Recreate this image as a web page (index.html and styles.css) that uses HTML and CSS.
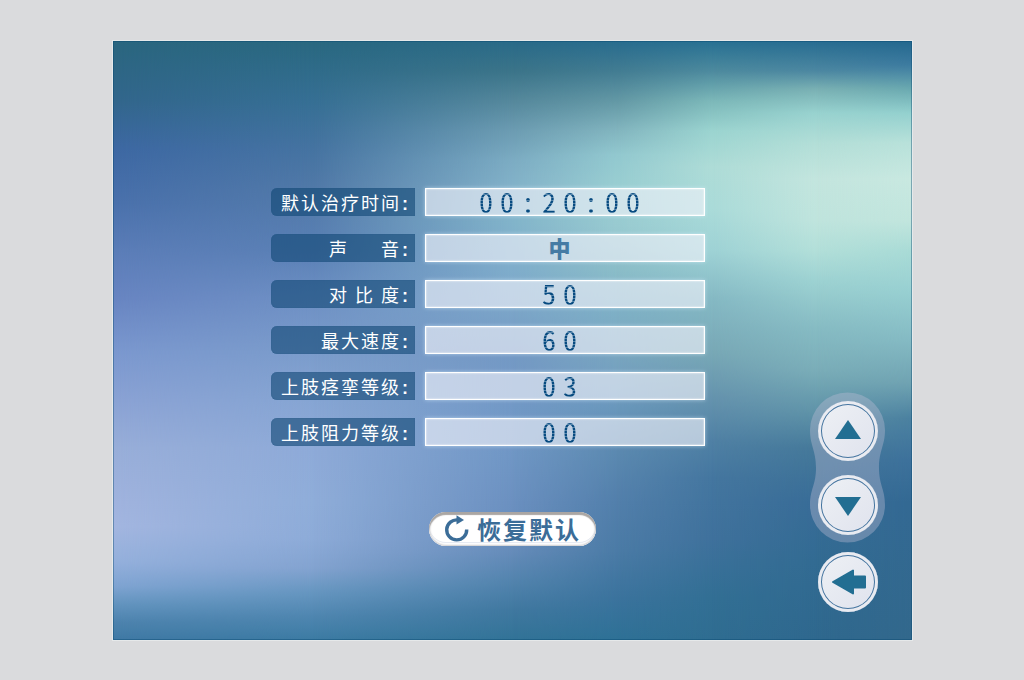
FILE: index.html
```html
<!DOCTYPE html>
<html lang="zh-CN">
  <head>
    <meta charset="UTF-8" />
    <meta name="viewport" content="width=device-width, initial-scale=1.0" />
    <title>默认设置</title>
    <link rel="stylesheet" href="styles.css">
  </head>
  <body>
    <div class="screen">
      <div class="backdrop" aria-hidden="true">
        <div class="wash wash-1"></div>
        <div class="wash wash-2"></div>
        <div class="wash wash-3"></div>
        <div class="wash wash-4"></div>
        <div class="wash wash-5"></div>
        <div class="wash wash-6"></div>
        <div class="wash wash-7"></div>
      </div>

      <form class="settings">
        <div class="rows">
          <div class="row">
            <label class="row-label" for="time">默认治疗时间<span class="colon">:</span></label>
            <div class="field"><input class="value" id="time" type="text" value="00:20:00" /></div>
          </div>
          <div class="row">
            <label class="row-label" for="sound">声&emsp;&nbsp;&nbsp;音<span class="colon">:</span></label>
            <div class="field"><input class="value word" id="sound" type="text" value="中" /></div>
          </div>
          <div class="row">
            <label class="row-label" for="contrast">对 比 度<span class="colon">:</span></label>
            <div class="field"><input class="value" id="contrast" type="text" value="50" /></div>
          </div>
          <div class="row">
            <label class="row-label" for="speed">最大速度<span class="colon">:</span></label>
            <div class="field"><input class="value" id="speed" type="text" value="60" /></div>
          </div>
          <div class="row">
            <label class="row-label" for="spasm">上肢痉挛等级<span class="colon">:</span></label>
            <div class="field"><input class="value" id="spasm" type="text" value="03" /></div>
          </div>
          <div class="row">
            <label class="row-label" for="resist">上肢阻力等级<span class="colon">:</span></label>
            <div class="field"><input class="value" id="resist" type="text" value="00" /></div>
          </div>
        </div>

        <div class="actions">
          <button class="reset" type="reset">
            <svg class="reset-icon" viewBox="0 0 26 28" aria-hidden="true">
              <path d="M14 5A10 10 0 1 0 22.700 14.500" fill="none" stroke="currentColor" stroke-width="3.4" />
              <path d="M12.500 0.300L20 5L12.500 9.500Z" fill="currentColor" />
            </svg>
            <span>恢复默认</span>
          </button>
        </div>
      </form>

      <nav class="side">
        <div class="stepper">
          <svg class="stepper-shape" viewBox="0 0 75 151" aria-hidden="true">
            <path d="M0 38A37.500 37.500 0 0 1 75 38C75 54 69 58 69 76C69 93 75 97 75 113A37.500 37.500 0 0 1 0 113C0 97 6 93 6 76C6 58 0 54 0 38Z" />
          </svg>
          <button class="round" type="button" aria-label="上">
            <svg viewBox="0 0 60 60"><path d="M30 19L43 38H17Z" /></svg>
          </button>
          <button class="round" type="button" aria-label="下">
            <svg viewBox="0 0 60 60"><path d="M17 22H43L30 41Z" /></svg>
          </button>
        </div>
        <button class="round" type="button" aria-label="返回">
          <svg viewBox="0 0 60 60"><path class="soft" d="M15 30L35 18.500V24.500H47V35.500H35V41.500Z" /></svg>
        </button>
      </nav>
    </div>
  </body>
</html>
```

FILE: styles.css
```css
* {
  margin: 0;
  padding: 0;
  box-sizing: border-box;
}

body {
  min-height: 100vh;
  padding: 41px 112px 40px 113px;
  display: flex;
  background-color: #dadbdd;
  font-family: "Noto Sans CJK SC", sans-serif;
}

.screen {
  flex: 1;
  position: relative;
  display: grid;
  grid-template-columns: 1fr 75px;
  padding-right: 27px;
  box-shadow: 0 0 0 1px #e6e9ea;
}

/* Colour mesh: each wash is a vertical gradient faded in from the previous one */
.backdrop,
.wash {
  position: absolute;
  inset: 0;
}

.backdrop::after {
  content: "";
  position: absolute;
  inset: 0;
  border: 1px solid rgba(5, 70, 110, 0.4);
}

.wash-1 {
  background: linear-gradient(#2a667f 0%, #32668c 10%, #3d68a3 18%, #4a71ac 27%, #5b7db8 35%, #6885c2 43%, #7b98cf 52%, #8aa2d4 60%, #98aed9 68%, #a0b3de 77%, #a3b6e0 81%, #94b0dc 87%, #7fa4d2 91%, #6394bf 94%, #4d83ae 97%, #3f79a5 100%);
}

.wash-2 {
  background: linear-gradient(#296880 0%, #366f94 10%, #4573a1 18%, #5179a8 25%, #5a80b5 35%, #6e90c4 43%, #7b9ccb 52%, #86a5d3 60%, #8eaad8 68%, #8fadd9 77%, #8dabd8 83%, #83a3d0 88%, #6696c0 92%, #4f86b0 96%, #3c7ba3 100%);
  mask-image: linear-gradient(to right, transparent, #000 25%);
}

.wash-3 {
  background: linear-gradient(#296a88 0%, #3b7489 5%, #55889c 10%, #6c9cb2 15%, #7cacc3 20%, #84b3ca 25%, #82b4ca 30%, #7fadcb 38%, #7ba5c8 45%, #7499c4 52%, #7299c6 60%, #7097c5 68%, #6b90c0 77%, #668cba 85%, #5384ae 90%, #4078a0 95%, #327397 100%);
  mask-image: linear-gradient(to right, transparent 25%, #000 50%);
}

.wash-4 {
  background: linear-gradient(#286c8e 0%, #427c92 5%, #6398a5 10%, #82b5bf 15%, #92c8cf 19%, #9acfd2 25%, #98cad0 31%, #8bbdc8 38%, #7eb0c6 45%, #7aa6c0 52%, #6c9abe 60%, #5d8bb1 67%, #527fab 77%, #4b7ba6 85%, #3b739d 93%, #2e7196 100%);
  mask-image: linear-gradient(to right, transparent 50%, #000 63%);
}

.wash-5 {
  background: linear-gradient(#277092 0%, #4d8a9e 5%, #7cb8b9 10%, #9bd4d0 15%, #aedcd7 21%, #aadbd9 28%, #9ed2d5 35%, #85b9c4 43%, #78a8b6 52%, #6492ad 60%, #4f80a4 67%, #44769f 73%, #3f719c 83%, #326f94 93%, #2f6d91 100%);
  mask-image: linear-gradient(to right, transparent 63%, #000 75%);
}

.wash-6 {
  background: linear-gradient(#276c91 0%, #4c87a1 5%, #79b0b3 8%, #98d2cf 12%, #b2ded7 17%, #c3e5de 23%, #bfe4dd 30%, #b2dfd9 35%, #9dd2d2 40%, #86bbc3 48%, #7aadb8 55%, #5f93a8 62%, #45799a 68%, #386c97 77%, #326b92 87%, #2f688e 100%);
  mask-image: linear-gradient(to right, transparent 75%, #000 88%);
}

.wash-7 {
  background: linear-gradient(#24688e 0%, #3d7ba0 4%, #6aa9b0 8%, #93d0ce 12%, #b8e1da 17%, #c8e8e0 23%, #c1e5dd 30%, #a9dbd6 35%, #97cfd1 42%, #84bac3 50%, #70a3b2 57%, #4b81a0 63%, #3d719b 70%, #336993 77%, #32688c 100%);
  mask-image: linear-gradient(to right, transparent 88%, #000);
}

.settings {
  position: relative;
  display: flex;
  flex-direction: column;
  align-items: center;
  padding: 147px 0 94px 53px;
}

.rows {
  display: flex;
  flex-direction: column;
  gap: 18px;
}

.row {
  display: grid;
  grid-template-columns: 144px 280px;
  gap: 10px;
}

.row-label {
  height: 28px;
  padding-right: 5px;
  border-radius: 6px 0 0 6px;
  background-color: rgba(15, 70, 115, 0.6);
  box-shadow: inset 0 0 1px #1f5583;
  color: #fff;
  font-size: 18px;
  line-height: 28px;
  letter-spacing: 2px;
  text-align: right;
  white-space: nowrap;
}

.colon {
  padding-left: 1px;
  font-family: "Liberation Sans", sans-serif;
  font-weight: 700;
}

.field {
  height: 28px;
  border: 1px solid #fff;
  background-color: rgba(240, 241, 248, 0.64);
  box-shadow: 0 0 4px rgba(220, 240, 255, 0.6), inset 0 0 2px #fff;
}

.value {
  display: block;
  width: 100%;
  height: 26px;
  padding: 0 4px 3px 0;
  border: none;
  background: repeating-linear-gradient(#064a80 0 2px, #5483a8 2px 3px);
  background-clip: text;
  color: transparent;
  font-family: "Noto Sans CJK SC", monospace;
  font-size: 28px;
  font-feature-settings: "hwid";
  line-height: 23px;
  letter-spacing: 7px;
  text-align: center;
}

.value.word {
  background: none;
  color: #457ba4;
  font-size: 22px;
  font-weight: 900;
}

.actions {
  margin-top: 66px;
  padding-left: 49px;
}

.reset {
  display: flex;
  align-items: center;
  gap: 7px;
  height: 34px;
  padding: 0 15px;
  border: none;
  border-radius: 17px;
  background-color: #fff;
  box-shadow: inset 0 3px 1px #aaa6a3, inset 0 0 2px 1px #c9c9cc, inset 0 -3px 0 #fff, inset 0 -4px 0 #e6eaf2;
  color: #3b6d98;
  font-family: inherit;
  font-size: 24px;
  font-weight: 700;
  line-height: 32px;
  letter-spacing: 2px;
  white-space: nowrap;
  cursor: pointer;
}

.reset-icon {
  width: 26px;
  height: 28px;
}

.side {
  position: relative;
  display: flex;
  flex-direction: column;
  align-items: center;
  justify-content: flex-end;
  gap: 9px;
  padding-bottom: 28px;
}

.stepper {
  position: relative;
  width: 75px;
  display: flex;
  flex-direction: column;
  align-items: center;
  gap: 14px;
  padding: 9px 0 8px;
}

.stepper-shape {
  position: absolute;
  inset: 0;
  fill: rgba(190, 188, 214, 0.38);
}

.round {
  position: relative;
  width: 60px;
  height: 60px;
  border: none;
  border-radius: 50%;
  background: linear-gradient(135deg, #eef1f5, #dfe2ed);
  box-shadow: inset 0 0 0 3px #e9ebf1, inset 0 0 0 4px #44749f;
  cursor: pointer;
}

.round svg {
  display: block;
  fill: #226e92;
}

.soft {
  stroke: #226e92;
  stroke-width: 2;
  stroke-linejoin: round;
}
```
